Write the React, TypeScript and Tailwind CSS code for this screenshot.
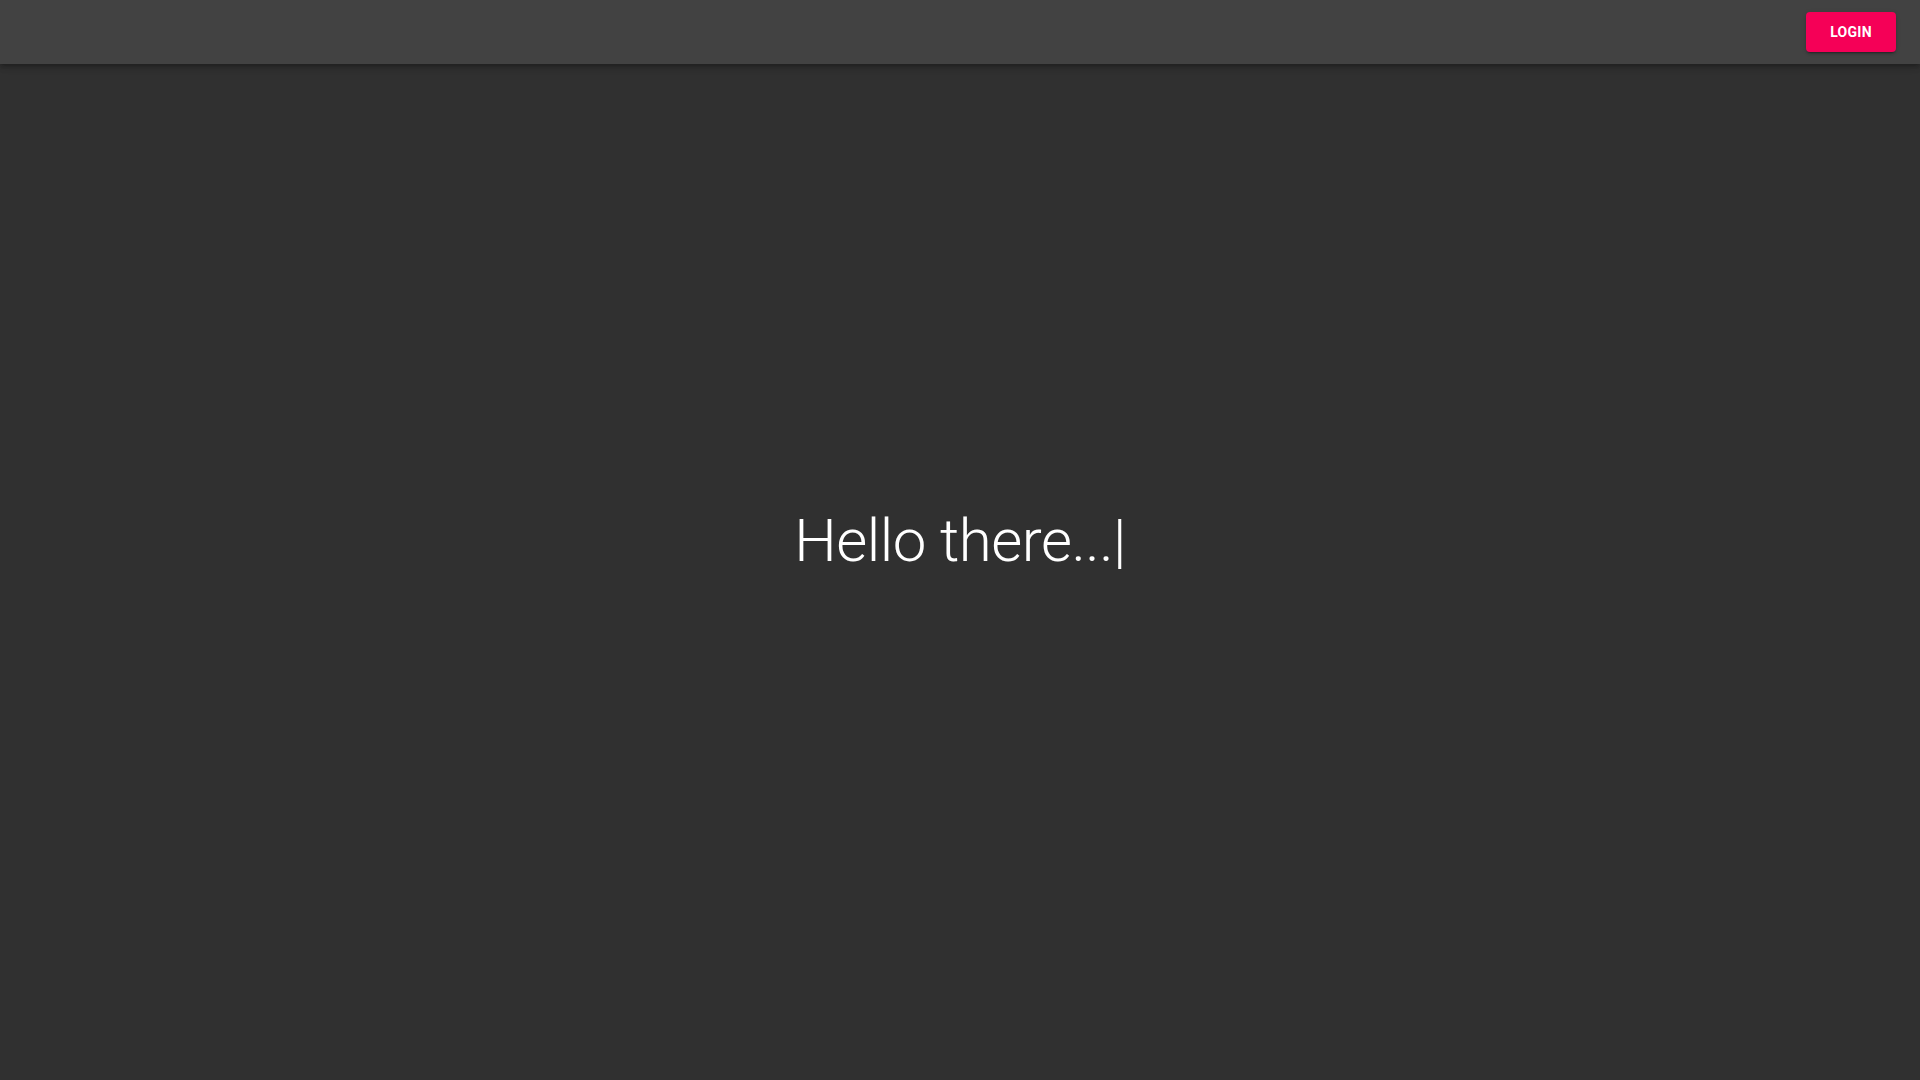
export default function App() {
  return (
    <div className="min-h-screen w-full bg-[#303030] flex flex-col" style={{ fontFamily: "Roboto, 'Liberation Sans', sans-serif" }}>
      <header className="h-16 w-full bg-[#424242] flex items-center justify-end px-6 shadow-[0_2px_4px_-1px_rgba(0,0,0,0.2),0_4px_5px_0_rgba(0,0,0,0.14),0_1px_10px_0_rgba(0,0,0,0.12)] z-10">
        <button className="h-10 w-[90px] rounded bg-[#f50057] text-white text-[14px] font-bold tracking-[0.02em] shadow-[0_3px_1px_-2px_rgba(0,0,0,0.2),0_2px_2px_0_rgba(0,0,0,0.14),0_1px_5px_0_rgba(0,0,0,0.12)]">
          LOGIN
        </button>
      </header>
      <main className="flex-1 flex items-center justify-center">
        <h1 className="text-[60px] font-light text-white leading-none tracking-[-0.00833em] -mt-[62px]">Hello there...|</h1>
      </main>
    </div>
  )
}
